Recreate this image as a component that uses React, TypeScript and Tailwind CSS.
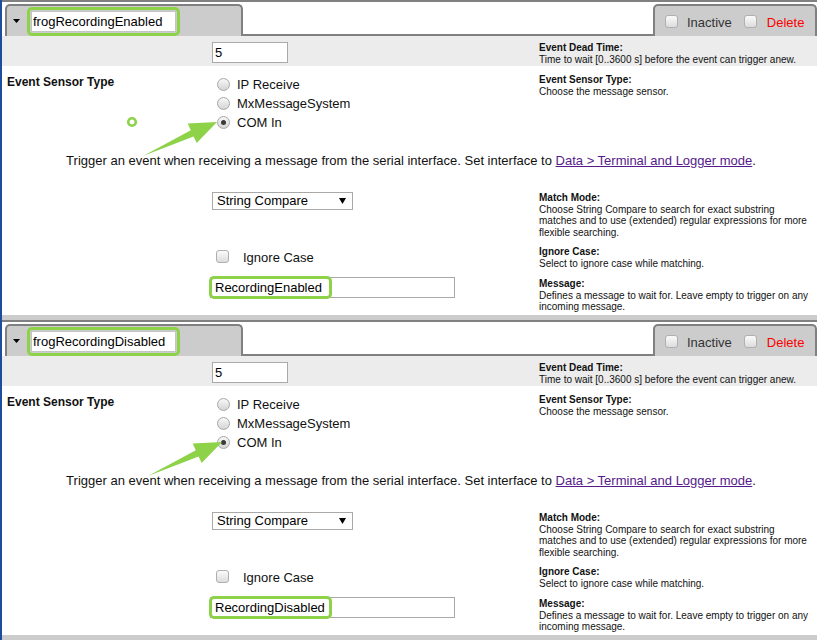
import React from "react";

const green = "border-[#8ed24a]";

function Checkbox() {
  return (
    <span className="inline-block h-[13px] w-[13px] shrink-0 rounded-[3px] border border-[#b0b0b0] bg-linear-to-b from-[#fbfbfb] to-[#dcdcdc]" />
  );
}

function Radio({ checked }: { checked?: boolean }) {
  return (
    <span className="flex h-[13px] w-[13px] shrink-0 items-center justify-center rounded-full border border-[#a8a8a8] bg-linear-to-b from-[#f8f8f8] to-[#d4d4d4]">
      {checked && <span className="h-[5px] w-[5px] rounded-full bg-[#3a3a3a]" />}
    </span>
  );
}

function Help({ title, lines }: { title: string; lines: string[] }) {
  return (
    <div className="text-[10px] leading-[11.5px] text-[#111]">
      <div className="font-bold">{title}</div>
      {lines.map((l) => (
        <div key={l} className="whitespace-nowrap">
          {l}
        </div>
      ))}
    </div>
  );
}

function Row({
  height,
  className = "",
  label,
  control,
  help,
}: {
  height: string;
  className?: string;
  label?: React.ReactNode;
  control?: React.ReactNode;
  help?: React.ReactNode;
}) {
  return (
    <div className={`grid grid-cols-[210px_327px_1fr] ${height} ${className}`}>
      <div>{label}</div>
      <div>{control}</div>
      <div>{help}</div>
    </div>
  );
}

function EventBlock({
  name,
  message,
  marker,
  shift,
}: {
  name: string;
  message: string;
  marker?: boolean;
  shift?: boolean;
}) {
  return (
    <section className="relative border-t-2 border-[#808080]">
      {/* tabs */}
      <div className="flex h-[34px] items-end">
        <div className="ml-[3px] flex h-[32px] w-[238px] items-center rounded-t-[5px] border-x-2 border-t-2 border-[#808080] bg-[#cccccc]">
          <svg width="7" height="4" className="ml-[6px]">
            <path d="M0 0H7L3.5 4Z" fill="#000" />
          </svg>
          <div className={`ml-[7px] rounded-[5px] border-[3px] ${green} p-[1px]`}>
            <input
              readOnly
              value={name}
              className="block h-[21px] w-[145px] border border-[#c4c4c4] bg-white px-[1px] text-[13px] text-black outline-none"
            />
          </div>
        </div>
        <div className="h-full flex-1 border-b-2 border-[#808080]" />
        <div className="flex h-[32px] w-[164px] items-center rounded-t-[5px] border-x-2 border-t-2 border-[#808080] bg-[#cccccc] text-[13px]">
          <span className="ml-[10px] flex">
            <Checkbox />
          </span>
          <span className="ml-[9px] pt-[3px] text-[#333]">Inactive</span>
          <span className="ml-[12px] flex">
            <Checkbox />
          </span>
          <span className="ml-[10px] pt-[3px] text-[#ff0000]">Delete</span>
        </div>
      </div>

      {/* dead time */}
      <Row
        height="h-[30px]"
        className="bg-[#ececec]"
        control={
          <div className="pt-[6px]">
            <input
              readOnly
              value="5"
              className="block h-[21px] w-[76px] border border-[#a9a9a9] bg-white px-[2px] text-[13px] text-black outline-none"
            />
          </div>
        }
        help={
          <div className="pt-[6px]">
            <Help
              title="Event Dead Time:"
              lines={["Time to wait [0..3600 s] before the event can trigger anew."]}
            />
          </div>
        }
      />

      {/* sensor type */}
      <Row
        height="h-[74px]"
        label={
          <div className="pl-[5px] pt-[9px] text-[12px] leading-[14px] font-bold text-[#111]">
            Event Sensor Type
          </div>
        }
        control={
          <div className="pt-[9px] text-[13px] text-[#111]">
            {["IP Receive", "MxMessageSystem", "COM In"].map((t) => (
              <div key={t} className="flex h-[19px] items-center gap-[7px] pl-[5px]">
                <Radio checked={t === "COM In"} />
                <span className="pt-[1px]">{t}</span>
              </div>
            ))}
          </div>
        }
        help={
          <div className="pt-[8px]">
            <Help title="Event Sensor Type:" lines={["Choose the message sensor."]} />
          </div>
        }
      />

      {/* description */}
      <div className="flex h-[40px] items-center justify-center pl-[3px] pt-[2px] text-[13px] text-[#111]">
        <span>
          Trigger an event when receiving a message from the serial interface. Set interface to{" "}
          <span className="text-[#551a8b] underline">Data &gt; Terminal and Logger mode</span>.
        </span>
      </div>

      {/* match mode */}
      <Row
        height="h-[60px]"
        control={
          <div className="pt-[12px]">
            <div className="flex h-[18px] w-[141px] items-center justify-between border border-[#a9a9a9] bg-white pl-[4px] pr-[6px] text-[13px] text-black">
              <span>String Compare</span>
              <svg width="7" height="6">
                <path d="M0 0H7L3.5 6Z" fill="#000" />
              </svg>
            </div>
          </div>
        }
        help={
          <div className="pt-[12px]">
            <Help
              title="Match Mode:"
              lines={[
                "Choose String Compare to search for exact substring",
                "matches and to use (extended) regular expressions for more",
                "flexible searching.",
              ]}
            />
          </div>
        }
      />

      {/* ignore case */}
      <Row
        height="h-[32px]"
        control={
          <div className="flex items-center pl-[4px] pt-[6px] text-[13px] text-[#111]">
            <Checkbox />
            <span className="ml-[14px] pt-[2px]">Ignore Case</span>
          </div>
        }
        help={
          <div className="pt-[6px]">
            <Help title="Ignore Case:" lines={["Select to ignore case while matching."]} />
          </div>
        }
      />

      {/* message */}
      <Row
        height="h-[43px]"
        control={
          <div className="pt-[5px]">
            <div className="relative -ml-[2px] w-[245px]">
              <input
                readOnly
                value={message}
                className="block h-[21px] w-[245px] border border-[#a9a9a9] bg-white pl-[4px] text-[13px] text-black outline-none"
              />
              <div className={`absolute -left-[1px] -top-[1px] h-[23px] w-[123px] rounded-[5px] border-[3px] ${green}`} />
            </div>
          </div>
        }
        help={
          <div className="pt-[6px]">
            <Help
              title="Message:"
              lines={[
                "Defines a message to wait for. Leave empty to trigger on any",
                "incoming message.",
              ]}
            />
          </div>
        }
      />

      <div className="h-[5px] bg-[#cccccc]" />

      {/* annotations */}
      <svg
        className="pointer-events-none absolute left-0 top-0"
        width="815"
        height="320"
      >
        <g transform={shift ? "translate(5 0)" : undefined}>
          <polygon
            points="141,154 188.8,128.2 185.7,121.6 215,120 194.7,141 191.6,134.4"
            fill="#8ed24a"
          />
        </g>
        {marker && <circle cx="130" cy="120" r="3.8" fill="none" stroke="#8ed24a" strokeWidth="2.6" />}
      </svg>
    </section>
  );
}

export default function App() {
  return (
    <div className="h-[640px] overflow-hidden border-l-2 border-[#1c4e9c] bg-white font-['Liberation_Sans',Arial,sans-serif]">
      <EventBlock name="frogRecordingEnabled" message="RecordingEnabled" marker />
      <EventBlock name="frogRecordingDisabled" message="RecordingDisabled" shift />
    </div>
  );
}
